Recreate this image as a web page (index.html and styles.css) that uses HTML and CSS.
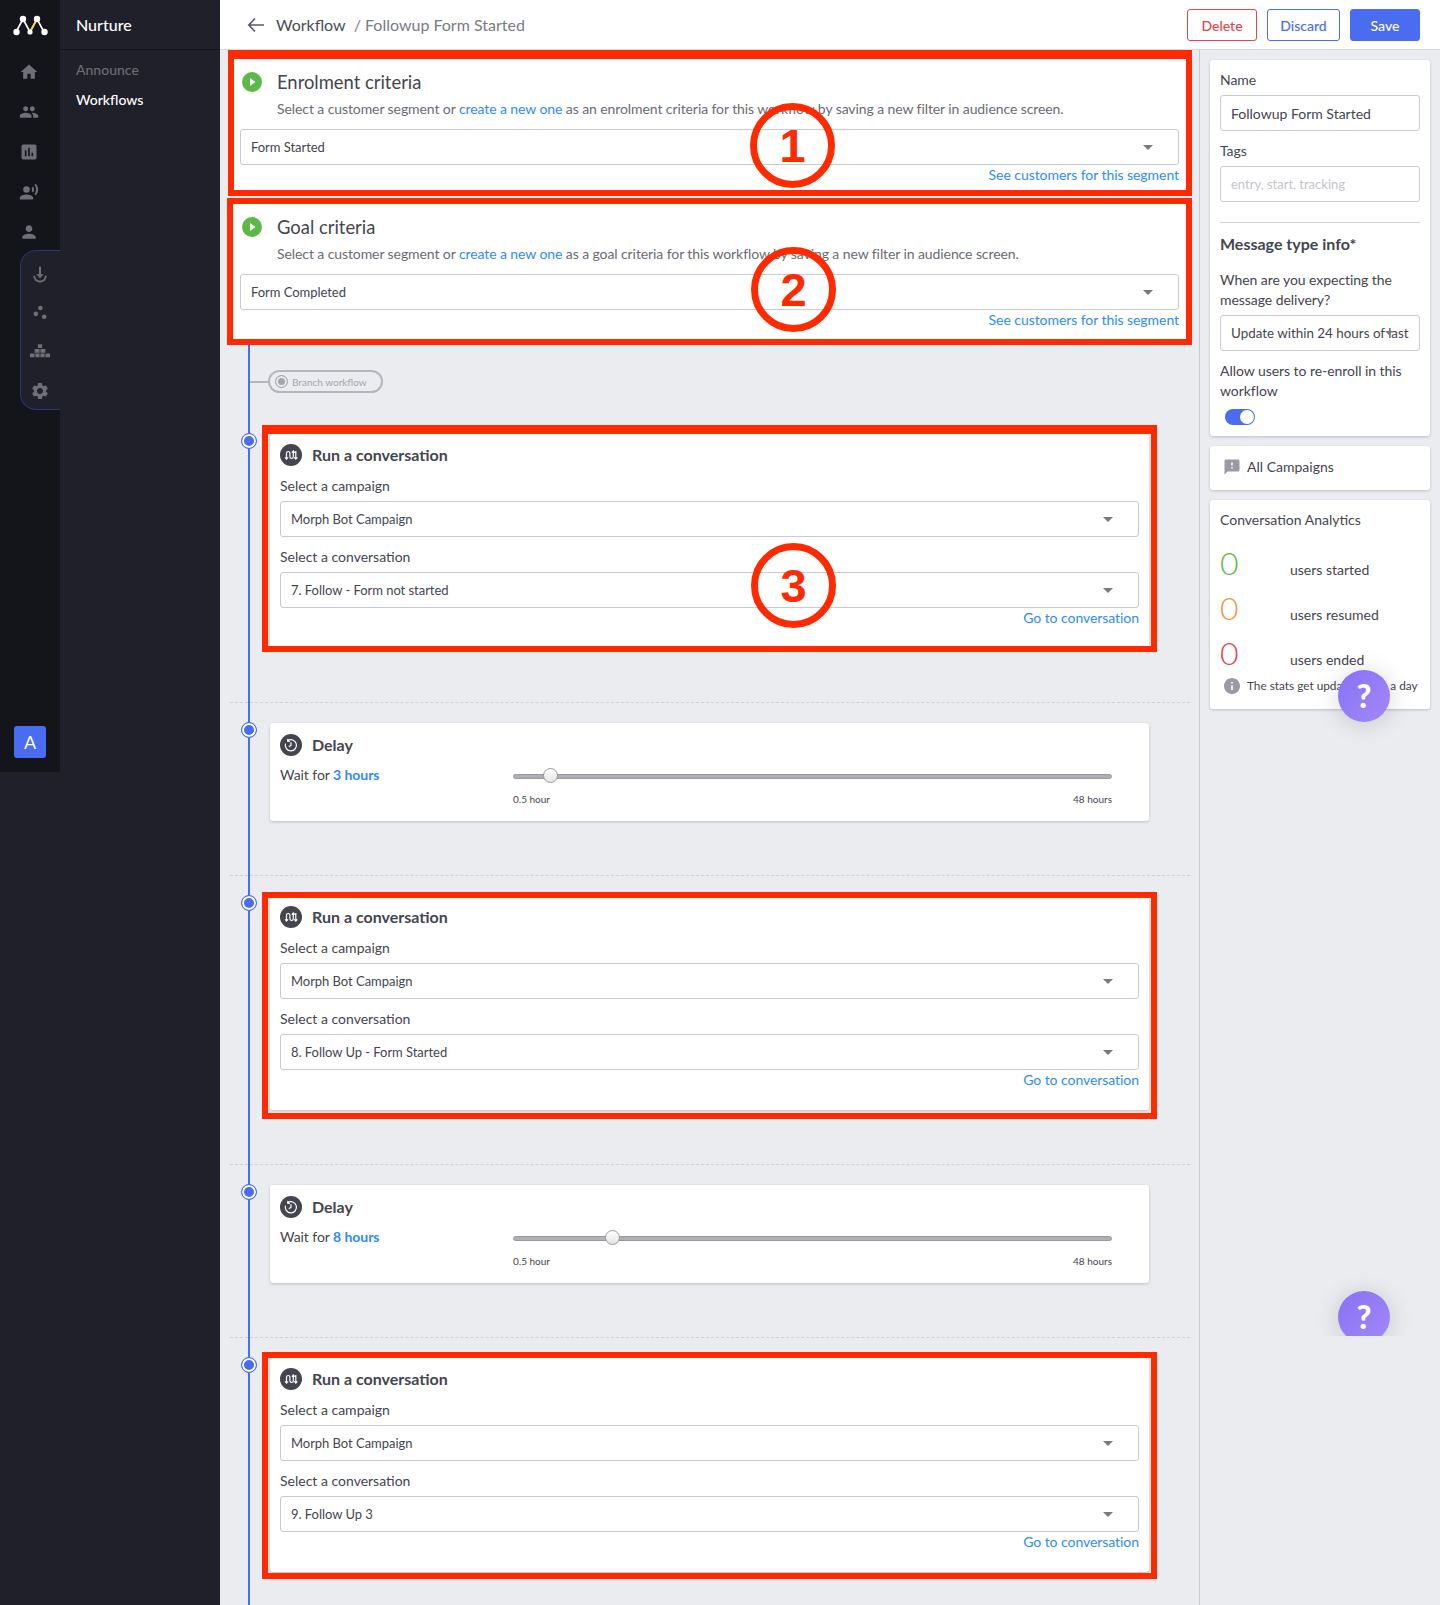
FILE: index.html
```html
<!DOCTYPE html>
<html lang="en">
<head>
<meta charset="utf-8">
<title>Nurture - Workflow</title>
<link rel="stylesheet" href="styles.css">
</head>
<body>
<svg class="defs" aria-hidden="true">
  <symbol id="i-conv" viewBox="0 0 22 22"><path d="M6.500 15V9.200a1.700 1.700 0 0 1 3.400 0v3.600a1.700 1.700 0 0 0 3.400 0V7M5 13.400 6.500 15 8 13.400M11.800 8.600 13.300 7l1.500 1.600M15.800 15V7M14.300 13.400l1.500 1.600 1.500-1.600" fill="none" stroke="#fff" stroke-width="1.200"/></symbol>
  <symbol id="i-delay" viewBox="0 0 22 22"><path d="M7.700 6.700a5.600 5.600 0 1 1-2.200 3M7.900 4.900 7.600 7.200l2.300.3M11 8.200 11 11.200 8.900 12.800" fill="none" stroke="#fff" stroke-width="1.200"/></symbol>
  <symbol id="i-play" viewBox="0 0 20 20"><circle cx="10" cy="10" r="10" fill="#5cb947"/><path d="M8 6l5.400 4L8 14z" fill="#fff"/></symbol>
</svg>

<div class="app">
  <aside class="side">
    <div class="rail">
      <svg class="logo" viewBox="0 0 36 22"><path d="M3 17 10 4l7 13 7-13 7 13" fill="none" stroke="#fff" stroke-width="1.600"/><path d="M17 17 24 4" stroke="#f5d742" stroke-width="1.600"/><circle cx="3.500" cy="17" r="3.200" fill="#fff"/><circle cx="10" cy="4" r="3.200" fill="#fff"/><circle cx="17" cy="17" r="2.600" fill="#fff"/><circle cx="24" cy="4" r="3.200" fill="#fff"/><circle cx="31.500" cy="17" r="3.200" fill="#fff"/></svg>
      <div class="rail-icons">
        <svg class="ico" viewBox="0 0 24 24"><path d="M10 20v-6h4v6h5v-8h3L12 3 2 12h3v8z"/></svg>
        <svg class="ico" viewBox="0 0 24 24"><path d="M16 11c1.660 0 2.990-1.340 2.990-3S17.660 5 16 5c-1.660 0-3 1.340-3 3s1.340 3 3 3zm-8 0c1.660 0 2.990-1.340 2.990-3S9.660 5 8 5C6.340 5 5 6.340 5 8s1.340 3 3 3zm0 2c-2.330 0-7 1.170-7 3.500V19h14v-2.500c0-2.330-4.670-3.500-7-3.500zm8 0c-.29 0-.62.02-.97.05 1.160.84 1.970 1.970 1.970 3.450V19h6v-2.500c0-2.330-4.670-3.500-7-3.500z"/></svg>
        <svg class="ico" viewBox="0 0 24 24"><path d="M19 3H5c-1.100 0-2 .9-2 2v14c0 1.100.9 2 2 2h14c1.100 0 2-.9 2-2V5c0-1.100-.9-2-2-2zM9 17H7v-7h2v7zm4 0h-2V7h2v10zm4 0h-2v-4h2v4z"/></svg>
        <svg class="ico" viewBox="0 0 24 24"><path d="M9 5a4 4 0 1 0 0 8 4 4 0 0 0 0-8zM9 15c-2.670 0-8 1.340-8 4v2h16v-2c0-2.660-5.330-4-8-4zm7.760-9.640-1.680 1.690c.84 1.180.84 2.710 0 3.890l1.680 1.690c2.020-2.020 2.020-5.070 0-7.270zM20.070 2l-1.630 1.630c2.770 3.020 2.770 7.560 0 10.740L20.070 16c3.900-3.890 3.910-9.950 0-14z"/></svg>
        <svg class="ico" viewBox="0 0 24 24"><path d="M12 12c2.210 0 4-1.790 4-4s-1.790-4-4-4-4 1.790-4 4 1.790 4 4 4zm0 2c-2.670 0-8 1.340-8 4v2h16v-2c0-2.660-5.330-4-8-4z"/></svg>
      </div>
      <div class="rail-group">
        <svg class="ico" viewBox="0 0 24 24"><path d="M10.800 2h2.400v9h3.300L12 15.800 7.500 11h3.300z"/><path d="M5 13a7 7 0 0 0 14 0" fill="none" stroke="#6f6f77" stroke-width="2.200"/></svg>
        <svg class="ico" viewBox="0 0 24 24"><circle cx="12.500" cy="6" r="2.800"/><circle cx="7" cy="13" r="2.800"/><circle cx="17" cy="16.500" r="2.800"/></svg>
        <svg class="ico" viewBox="0 0 24 24"><path d="M9.500 4h5v4.500h-5zM5.500 9.500h6v4.500h-6zM12.500 9.500h6v4.500h-6zM0 15h5.500v4.500H0zM6.500 15h5v4.500h-5zM12.500 15h5v4.500h-5zM18.500 15H24v4.500h-5.500z"/></svg>
        <svg class="ico" viewBox="0 0 24 24"><path d="M19.140 12.940c.04-.3.06-.61.06-.94 0-.32-.02-.64-.07-.94l2.030-1.580c.18-.14.23-.41.12-.61l-1.920-3.320c-.12-.22-.37-.29-.59-.22l-2.390.96c-.5-.38-1.030-.7-1.620-.94l-.36-2.540c-.04-.24-.24-.41-.48-.41h-3.840c-.24 0-.43.17-.47.41l-.36 2.540c-.59.24-1.130.57-1.620.94l-2.390-.96c-.22-.08-.47 0-.59.22L2.740 8.870c-.12.21-.08.47.12.61l2.030 1.580c-.05.3-.09.63-.09.94s.02.64.07.94l-2.030 1.580c-.18.14-.23.41-.12.61l1.920 3.320c.12.22.37.29.59.22l2.390-.96c.5.38 1.030.7 1.620.94l.36 2.540c.05.24.24.41.48.41h3.840c.24 0 .44-.17.47-.41l.36-2.540c.59-.24 1.130-.56 1.620-.94l2.390.96c.22.08.47 0 .59-.22l1.920-3.320c.12-.22.07-.47-.12-.61l-2.010-1.580zM12 15.600c-1.980 0-3.600-1.620-3.600-3.600s1.620-3.600 3.600-3.600 3.600 1.620 3.600 3.600-1.620 3.600-3.600 3.600z"/></svg>
      </div>
      <div class="avatar">A</div>
    </div>
    <nav class="nav">
      <div class="nav-title">Nurture</div>
      <div class="nav-items">
        <a class="nav-link">Announce</a>
        <a class="nav-link is-active">Workflows</a>
      </div>
    </nav>
  </aside>

  <div class="content">
    <header class="topbar">
      <svg class="back" viewBox="0 0 18 16"><path d="M17 8H2M8 1.500 1.800 8 8 14.500" fill="none" stroke="#5b5b64" stroke-width="1.700"/></svg>
      <span class="crumb">Workflow</span>
      <span class="crumb-sub">/ Followup Form Started</span>
      <div class="actions">
        <button class="btn btn-red">Delete</button>
        <button class="btn btn-line">Discard</button>
        <button class="btn btn-solid">Save</button>
      </div>
    </header>

    <div class="body">
      <main class="main">
        <section class="crit crit-first hl hl-crit1">
          <div class="crit-head"><svg class="play"><use href="#i-play"/></svg><h2>Enrolment criteria</h2></div>
          <p class="crit-desc">Select a customer segment or <a class="lnk">create a new one</a> as an enrolment criteria for this workflow by saving a new filter in audience screen.</p>
          <div class="select"><span>Form Started</span><i class="caret"></i></div>
          <a class="lnk lnk-end">See customers for this segment</a>
          <div class="mark mark-1">1</div>
        </section>
        <section class="crit crit-second hl hl-crit2">
          <div class="crit-head"><svg class="play"><use href="#i-play"/></svg><h2>Goal criteria</h2></div>
          <p class="crit-desc">Select a customer segment or <a class="lnk">create a new one</a> as a goal criteria for this workflow by saving a new filter in audience screen.</p>
          <div class="select"><span>Form Completed</span><i class="caret"></i></div>
          <a class="lnk lnk-end">See customers for this segment</a>
          <div class="mark mark-2">2</div>
        </section>

        <div class="timeline">
          <div class="branch-row">
            <i class="branch-stub"></i>
            <div class="branch"><i class="branch-dot"></i><span>Branch workflow</span></div>
          </div>

          <div class="step step-first">
            <i class="node"></i>
            <section class="card conv hl hl-conv1">
              <div class="card-head"><svg class="badge"><use href="#i-conv"/></svg><h3>Run a conversation</h3></div>
              <div class="label">Select a campaign</div>
              <div class="select"><span>Morph Bot Campaign</span><i class="caret"></i></div>
              <div class="label">Select a conversation</div>
              <div class="select"><span>7. Follow - Form not started</span><i class="caret"></i></div>
              <a class="lnk lnk-end">Go to conversation</a>
              <div class="mark mark-3">3</div>
            </section>
          </div>

          <div class="step">
            <i class="node"></i>
            <section class="card delay">
              <div class="card-head"><svg class="badge"><use href="#i-delay"/></svg><h3>Delay</h3></div>
              <div class="delay-row">
                <div class="wait">Wait for <b>3 hours</b></div>
                <div class="slider">
                  <div class="track"><i class="thumb" style="left:30.7px"></i></div>
                  <div class="ends"><span>0.5 hour</span><span>48 hours</span></div>
                </div>
              </div>
            </section>
          </div>

          <div class="step">
            <i class="node"></i>
            <section class="card conv hl hl-conv2">
              <div class="card-head"><svg class="badge"><use href="#i-conv"/></svg><h3>Run a conversation</h3></div>
              <div class="label">Select a campaign</div>
              <div class="select"><span>Morph Bot Campaign</span><i class="caret"></i></div>
              <div class="label">Select a conversation</div>
              <div class="select"><span>8. Follow Up - Form Started</span><i class="caret"></i></div>
              <a class="lnk lnk-end">Go to conversation</a>
            </section>
          </div>

          <div class="step">
            <i class="node"></i>
            <section class="card delay">
              <div class="card-head"><svg class="badge"><use href="#i-delay"/></svg><h3>Delay</h3></div>
              <div class="delay-row">
                <div class="wait">Wait for <b>8 hours</b></div>
                <div class="slider">
                  <div class="track"><i class="thumb" style="left:93px"></i></div>
                  <div class="ends"><span>0.5 hour</span><span>48 hours</span></div>
                </div>
              </div>
            </section>
          </div>

          <div class="step">
            <i class="node"></i>
            <section class="card conv hl hl-conv3">
              <div class="card-head"><svg class="badge"><use href="#i-conv"/></svg><h3>Run a conversation</h3></div>
              <div class="label">Select a campaign</div>
              <div class="select"><span>Morph Bot Campaign</span><i class="caret"></i></div>
              <div class="label">Select a conversation</div>
              <div class="select"><span>9. Follow Up 3</span><i class="caret"></i></div>
              <a class="lnk lnk-end">Go to conversation</a>
            </section>
          </div>
        </div>
      </main>

      <aside class="panel">
        <section class="pcard pcard-form">
          <div class="plabel">Name</div>
          <div class="pinput">Followup Form Started</div>
          <div class="plabel plabel-gap">Tags</div>
          <div class="pinput pinput-ph">entry, start, tracking</div>
          <hr class="prule">
          <h4>Message type info*</h4>
          <div class="plabel ptext">When are you expecting the message delivery?</div>
          <div class="pinput pinput-clip"><span>Update within 24 hours of last interaction</span><i class="caret caret-float"></i></div>
          <div class="plabel plabel-gap">Allow users to re-enroll in this workflow</div>
          <div class="toggle"><i></i></div>
        </section>
        <section class="pcard pcard-row">
          <svg class="fb" viewBox="0 0 24 24"><path d="M20 2H4c-1.100 0-1.990.9-1.990 2L2 22l4-4h14c1.100 0 2-.9 2-2V4c0-1.100-.9-2-2-2zm-7 12h-2v-2h2v2zm0-4h-2V6h2v4z"/></svg>
          <span>All Campaigns</span>
        </section>
        <section class="pcard pcard-stats">
          <div class="stats-title">Conversation Analytics</div>
          <div class="stat"><b class="num num-g">0</b><span>users started</span></div>
          <div class="stat"><b class="num num-o">0</b><span>users resumed</span></div>
          <div class="stat"><b class="num num-r">0</b><span>users ended</span></div>
          <div class="note"><svg class="inf" viewBox="2 2 20 20"><path d="M12 2C6.480 2 2 6.480 2 12s4.480 10 10 10 10-4.480 10-10S17.520 2 12 2zm1 15h-2v-6h2v6zm0-8h-2V7h2v2z"/></svg><span>The stats get updated once a day</span></div>
        </section>
      </aside>
    </div>
  </div>

  <div class="help help-1">?</div>
  <div class="help-clip"><div class="help help-2">?</div></div>
</div>
</body>
</html>
```
FILE: styles.css
```css
* { box-sizing: border-box; }
html, body { margin: 0; padding: 0; }
body { font-family: "Lato", "Liberation Sans", sans-serif; font-size: 14px; line-height: 20px; color: #45454f; background: #ebecf0; }
.defs { position: absolute; width: 0; height: 0; }
h2, h3, h4, p { margin: 0; }

.app { position: relative; display: flex; width: 1440px; height: 1605px; overflow: hidden; }

/* sidebars */
.side { display: flex; width: 220px; flex: none; background: #1f2029; }
.rail { display: flex; flex-direction: column; width: 60px; height: 772px; background: #14151a; }
.logo { display: block; width: 36px; height: 22px; margin: 15px 0 0 13px; }
.ico { display: block; width: 20px; height: 20px; fill: #6f6f77; }
.rail-icons { display: flex; flex-direction: column; align-items: center; gap: 20px; width: 58px; margin-top: 25px; }
.rail-group { display: flex; flex-direction: column; gap: 18px; width: 40px; height: 160px; margin: 8px 0 0 20px; padding: 14px 0 0 9px; background: #1f2029; border: 1px solid #2a3675; border-right: 0; border-radius: 16px 0 0 16px; }
.rail-group .ico:last-child { margin-top: 2px; }
.avatar { width: 32px; height: 32px; margin: auto 0 14px 14px; background: #4a6cf0; border-radius: 3px; color: #fff; font-size: 18px; line-height: 32px; text-align: center; }
.nav { width: 160px; }
.nav-title { height: 50px; padding-left: 16px; border-bottom: 1px solid #14151a; color: #fff; font-size: 16px; font-weight: 500; line-height: 50px; }
.nav-items { display: flex; flex-direction: column; gap: 10px; padding: 10px 0 0 16px; }
.nav-link { color: #6c6d75; font-size: 14px; font-weight: 500; }
.nav-link.is-active { color: #fff; }

/* top bar */
.content { display: flex; flex-direction: column; width: 1220px; }
.topbar { display: flex; align-items: center; flex: none; height: 50px; padding: 1px 20px 0 27px; background: #fff; border-bottom: 1px solid #d8d9de; }
.back { width: 18px; height: 16px; margin-right: 11px; }
.crumb { font-size: 16px; color: #4b4b55; }
.crumb-sub { margin-left: 8px; font-size: 16px; color: #7b7b85; }
.actions { display: flex; gap: 10px; margin-left: auto; }
.btn { height: 32px; padding: 0; border: 1px solid; border-radius: 3px; background: #fff; font: 500 14px "Lato", sans-serif; }
.btn-red { width: 70px; color: #e8434d; border-color: #e8434d; }
.btn-line { width: 73px; color: #4a6cf0; border-color: #4a6cf0; }
.btn-solid { width: 70px; background: #4a6cf0; border-color: #4a6cf0; color: #fff; }

.body { display: flex; flex: 1; min-height: 0; }
.main { width: 980px; flex: none; border-right: 1px solid #c9cad0; padding-top: 9px; }

/* highlight frames */
.hl { position: relative; }
.hl::after { content: ""; position: absolute; border: 6px solid #ff2a00; pointer-events: none; z-index: 2; }
.hl-crit1::after { inset: -9px -6px -6px -6px; border-top-width: 9px; }
.hl-crit2::after { inset: -6px -6px -6px -7px; }
.hl-conv1::after { inset: -9px -8px -4px -8px; border-top-width: 9px; }
.hl-conv2::after { inset: -4px -8px -9px -8px; }
.hl-conv3::after { inset: -6px -8px -7px -8px; }
.mark { position: absolute; z-index: 3; width: 85px; height: 85px; border: 7px solid #ff2a00; border-radius: 50%; color: #ff2a00; font: 700 47px/71px "Liberation Sans", sans-serif; text-align: center; }
.mark-1 { top: 44px; left: 516px; }
.mark-2 { top: 43px; left: 517px; }
.mark-3 { top: 109px; left: 481px; }

/* criteria cards */
.crit { width: 952px; margin-left: 14px; padding: 11px 7px 5px 6px; background: #fff; }
.crit-second { margin-top: 14px; padding-bottom: 9px; }
.crit-head { display: flex; align-items: center; height: 24px; margin-left: 2px; }
.play { width: 20px; height: 20px; margin-right: 15px; }
.crit-head h2 { font-size: 18.400px; font-weight: 400; line-height: 24px; color: #45454f; }
.crit-desc { margin: 5px 0 10px 37px; color: #6b6b75; white-space: nowrap; letter-spacing: -.09px; }
.lnk { color: #2d8cff; }
.lnk-end { display: block; text-align: right; letter-spacing: -.06px; }
.select { display: flex; align-items: center; justify-content: space-between; height: 36px; padding: 0 25px 0 10px; background: #fff; border: 1px solid #c9cad0; border-radius: 3px; font-size: 13px; letter-spacing: -.04px; }
.caret { display: block; width: 0; height: 0; border-style: solid; border-width: 5px 5px 0; border-color: #7b7b7b transparent transparent; }

/* timeline */
.timeline { position: relative; margin-left: 10px; width: 960px; padding-top: 31px; }
.timeline::before { content: ""; position: absolute; left: 18px; top: 0; bottom: 0; width: 2px; background: #4a6cf0; }
.branch-row { display: flex; align-items: center; height: 23px; margin-left: 20px; }
.branch-stub { width: 18px; height: 2px; background: #b5b5bb; }
.branch { display: flex; align-items: center; width: 115px; height: 23px; padding-left: 5px; border: 2px solid #b5b5bb; border-radius: 12px; color: #a4a4ab; font-size: 10px; }
.branch-dot { width: 13px; height: 13px; margin-right: 4px; border: 1px solid #a4a4ab; border-radius: 50%; background: #a4a4ab; box-shadow: inset 0 0 0 2px #ebecf0; }
.step { position: relative; padding: 20px 0 54px; border-top: 1px dashed #cfd0d6; }
.step-first { margin-top: 20px; border-top-color: transparent; }
.node { position: absolute; z-index: 1; left: 11px; top: 19px; width: 16px; height: 16px; background: #4a6cf0; border: 1.500px solid #4a6cf0; border-radius: 50%; box-shadow: inset 0 0 0 2px #fff; }
.card { width: 879px; margin-left: 40px; padding: 10px; background: #fff; border-radius: 3px; box-shadow: 0 1px 3px rgba(0, 0, 0, .2); }
.conv { height: 214px; }
.delay { height: 98px; padding-top: 11px; }
.card-head { display: flex; align-items: center; height: 22px; }
.badge { width: 22px; height: 22px; margin-right: 10px; border-radius: 50%; background: #45454f; }
.card-head h3 { font-size: 16px; font-weight: 700; color: #45454f; }
.conv .label { margin: 10px 0 5px; }
.delay-row { display: flex; margin-top: 9px; }
.wait { width: 233px; flex: none; letter-spacing: -.06px; }
.wait b { color: #2d8cff; font-size: 14px; }
.slider { width: 599px; padding-top: 9px; }
.track { position: relative; height: 5px; background: #b0b0b4; border: 1px solid #9a9a9e; border-radius: 3px; }
.thumb { position: absolute; top: -7px; width: 15px; height: 15px; margin-left: -2px; background: linear-gradient(#fff, #e4e4e6); border: 1px solid #9a9a9e; border-radius: 50%; }
.ends { display: flex; justify-content: space-between; margin-top: 12px; font-size: 10px; line-height: 16px; }

/* right panel */
.panel { display: flex; flex-direction: column; gap: 10px; width: 240px; flex: none; padding: 10px; }
.pcard { background: #fff; border-radius: 3px; box-shadow: 0 1px 3px rgba(0, 0, 0, .2); padding: 10px; }
.pcard-form { height: 376px; }
.plabel { letter-spacing: -.05px; }
.plabel-gap { margin-top: 10px; }
.pinput { position: relative; height: 36px; margin-top: 5px; padding: 0 10px; background: #fff; border: 1px solid #c9cad0; border-radius: 3px; line-height: 36px; white-space: nowrap; }
.pinput-ph { color: #c4c4c9; font-size: 13px; line-height: 34px; }
.pinput-clip { line-height: 34px; font-size: 13.400px; }
.pinput-clip span { display: block; overflow: hidden; }
.caret-float { position: absolute; top: 15px; left: 164px; border-width: 4px 4px 0; }
.prule { height: 1px; margin: 20px 0 9px; border: 0; background: #cfd0d6; }
h4 { font-size: 16px; font-weight: 700; line-height: 24px; }
.ptext { margin-top: 14px; }
.toggle { position: relative; width: 30px; height: 16px; margin: 8px 0 0 5px; background: #4a6cf0; border-radius: 8px; }
.toggle i { position: absolute; top: 1px; right: 1px; width: 14px; height: 14px; background: #fff; border-radius: 50%; }
.pcard-row { display: flex; align-items: center; height: 44px; padding: 0 0 2px 13px; }
.fb { width: 18px; height: 18px; margin-right: 6px; fill: #9a9aa2; }
.pcard-stats { height: 209px; }
.stats-title { margin-bottom: 10px; }
.stat { display: flex; align-items: baseline; height: 45px; line-height: 45px; }
.num { width: 70px; font-size: 32px; font-weight: 300; }
.num-g { color: #5cb947; }
.num-o { color: #f5953a; }
.num-r { color: #ee3f4a; }
.note { display: flex; align-items: center; margin-left: 4px; margin-top: 1px; font-size: 11.800px; white-space: nowrap; }
.inf { width: 16px; height: 16px; margin-right: 7px; fill: #9a9aa2; }

/* help bubbles */
.help { position: absolute; width: 52px; height: 52px; background: linear-gradient(135deg, #8672f5, #a488f8); border-radius: 50%; box-shadow: 0 2px 24px rgba(0, 0, 0, .16); color: #fff; font-size: 32px; font-weight: 900; line-height: 52px; text-align: center; }
.help-1 { left: 1338px; top: 670px; }
.help-clip { position: absolute; left: 1240px; top: 1236px; width: 200px; height: 100px; overflow: hidden; }
.help-2 { left: 98px; top: 55px; }
```
